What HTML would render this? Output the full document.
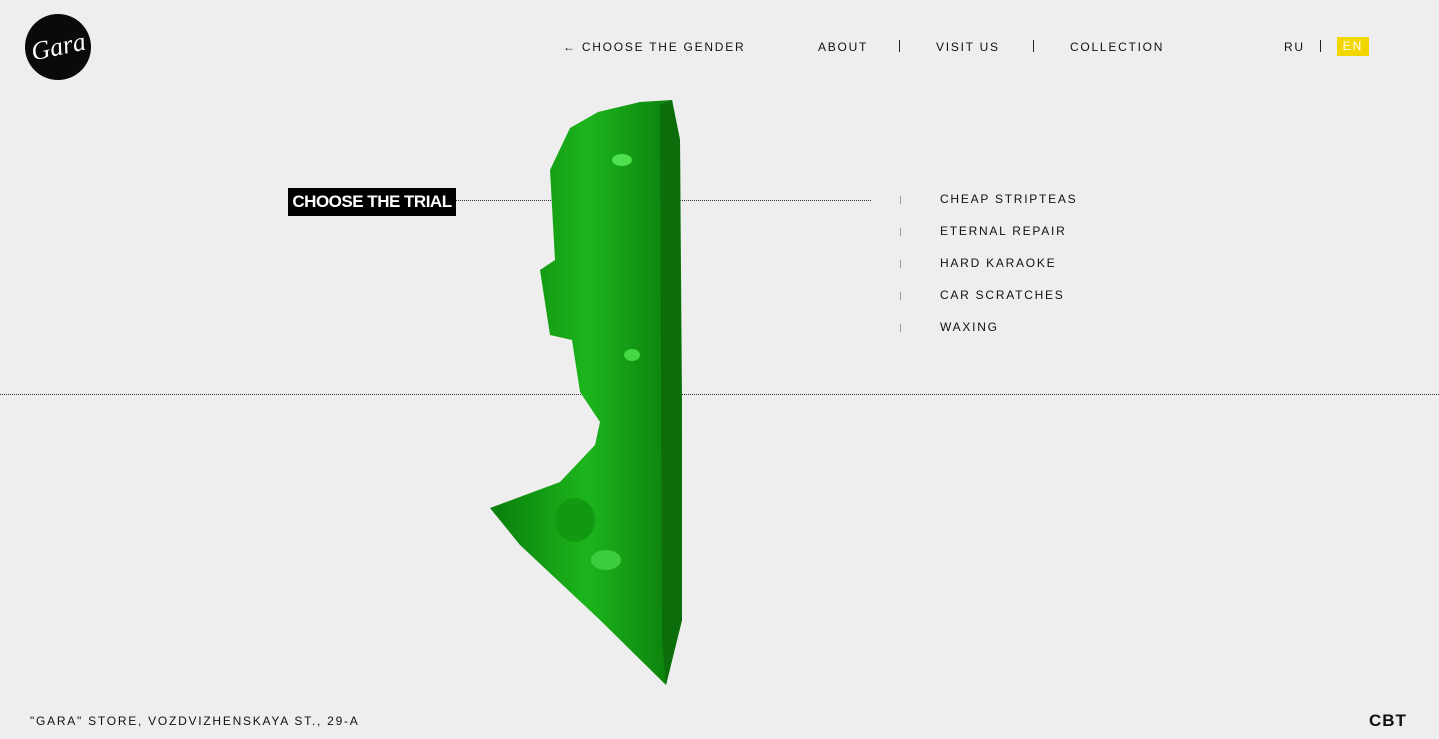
<!DOCTYPE html>
<html><head><meta charset="utf-8"><style>
body{margin:0;width:1439px;height:739px;background:#eeeeee;font-family:"Liberation Sans",sans-serif;position:relative;overflow:hidden;color:#111}
.t{position:absolute;font-size:12px;letter-spacing:1.75px;white-space:nowrap}
.logo{position:absolute;left:25px;top:14px;width:66px;height:66px;border-radius:50%;background:#0a0a0a}
.logo span{position:absolute;left:6px;top:18px;color:#fff;font-family:"Liberation Serif",serif;font-style:italic;font-size:26px;transform:rotate(-12deg)}
.dots{position:absolute;border-top:1px dotted #333;height:0}
.sep{position:absolute;width:1px;height:12px;background:#222}
.ms{position:absolute;width:1px;height:8px;background:#999;left:900px}
</style></head><body>
<div class="logo"><span>Gara</span></div>
<div class="t" style="left:563px;top:40px">← CHOOSE THE GENDER</div>
<div class="t" style="left:818px;top:40px">ABOUT</div>
<div class="sep" style="left:899px;top:40px"></div>
<div class="t" style="left:936px;top:40px">VISIT US</div>
<div class="sep" style="left:1033px;top:40px"></div>
<div class="t" style="left:1070px;top:40px">COLLECTION</div>
<div class="t" style="left:1284px;top:40px">RU</div>
<div class="sep" style="left:1320px;top:40px"></div>
<div style="position:absolute;left:1337px;top:37px;width:32px;height:19px;background:#f2d600;color:#fff;font-size:12px;letter-spacing:2px;text-align:center;line-height:19px">EN</div>

<div class="dots" style="left:0;right:0;top:394px"></div>
<div class="dots" style="left:456px;width:415px;top:200px"></div>

<svg style="position:absolute;left:0;top:0" width="1439" height="739">
<defs>
<linearGradient id="g" x1="0" x2="1" y1="0" y2="0">
<stop offset="0" stop-color="#0a7d0a"/><stop offset=".5" stop-color="#1cb51c"/><stop offset="1" stop-color="#0a7a0a"/></linearGradient>
</defs>
<path d="M598,112 L640,102 L672,100 L680,140 L682,400 L682,620 L666,685 L600,620 L520,545 L490,508 L560,482 L595,445 L600,422 L580,392 L572,340 L550,335 L540,270 L555,260 L550,170 L570,128 Z" fill="url(#g)"/>
<path d="M660,105 L672,100 L680,140 L682,620 L666,685 L662,640 Z" fill="#0b6e0b"/>
<ellipse cx="622" cy="160" rx="10" ry="6" fill="#4fe04f"/>
<ellipse cx="632" cy="355" rx="8" ry="6" fill="#45d845"/>
<ellipse cx="606" cy="560" rx="15" ry="10" fill="#3ccc3c"/>
<ellipse cx="575" cy="520" rx="20" ry="22" fill="#119911"/>
</svg>
<div style="position:absolute;left:288px;top:188px;width:168px;height:28px;background:#000;color:#fff;font-weight:bold;font-size:17px;letter-spacing:-0.5px;line-height:28px;text-align:center">CHOOSE THE TRIAL</div>

<div class="ms" style="top:196px"></div><div class="t" style="left:940px;top:192px">CHEAP STRIPTEAS</div>
<div class="ms" style="top:228px"></div><div class="t" style="left:940px;top:224px">ETERNAL REPAIR</div>
<div class="ms" style="top:260px"></div><div class="t" style="left:940px;top:256px">HARD KARAOKE</div>
<div class="ms" style="top:292px"></div><div class="t" style="left:940px;top:288px">CAR SCRATCHES</div>
<div class="ms" style="top:324px"></div><div class="t" style="left:940px;top:320px">WAXING</div>

<div class="t" style="left:30px;top:714px">"GARA" STORE, VOZDVIZHENSKAYA ST., 29-A</div>
<div style="position:absolute;left:1369px;top:711px;font-weight:bold;font-size:17px;letter-spacing:1px">CBT</div>
</body></html>
